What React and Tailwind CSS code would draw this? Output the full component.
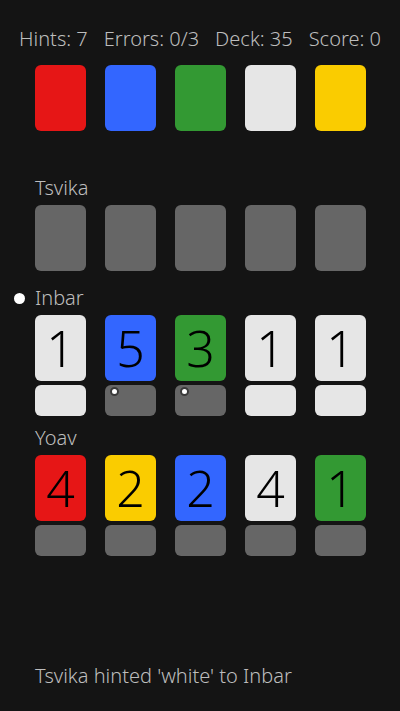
import React from "react";

const COLORS = {
  red: "bg-[#e61616]",
  blue: "bg-[#3366ff]",
  green: "bg-[#339933]",
  white: "bg-[#e6e6e6]",
  yellow: "bg-[#facc00]",
  back: "bg-[#666666]",
};

const fireworks = ["red", "blue", "green", "white", "yellow"];

const players = [
  { name: "Tsvika", mine: true, gap: "mb-[15px]", cards: [{}, {}, {}, {}, {}] },
  {
    name: "Inbar",
    active: true,
    gap: "mb-[10px]",
    cards: [
      { color: "white", n: 1, hint: "white" },
      { color: "blue", n: 5, dot: true },
      { color: "green", n: 3, dot: true },
      { color: "white", n: 1, hint: "white" },
      { color: "white", n: 1, hint: "white" },
    ],
  },
  {
    name: "Yoav",
    gap: "",
    cards: [
      { color: "red", n: 4 },
      { color: "yellow", n: 2 },
      { color: "blue", n: 2 },
      { color: "white", n: 4 },
      { color: "green", n: 1 },
    ],
  },
];

function Card({ color, n }) {
  return (
    <div
      className={`w-[51px] h-[66px] rounded-[6px] flex items-center justify-center text-[50px] font-light leading-none text-black ${
        COLORS[color] || COLORS.back
      }`}
    >
      {n}
    </div>
  );
}

function Hint({ hint, dot }) {
  return (
    <div
      className={`relative w-[51px] h-[31px] rounded-[6px] ${
        hint ? COLORS[hint] : COLORS.back
      }`}
    >
      {dot && (
        <span className="absolute left-[5px] top-[2px] w-[9px] h-[9px] rounded-full bg-white border-2 border-[#3a3a3a]" />
      )}
    </div>
  );
}

export default function App() {
  return (
    <div
      className="w-[400px] h-[711px] bg-[#141414] text-[#bdbdbd] font-light flex flex-col"
      style={{ fontFamily: "'Noto Sans', sans-serif" }}
    >
      <div className="flex justify-center gap-[16px] text-[20px] leading-6 mt-[27px]">
        <span>Hints: 7</span>
        <span>Errors: 0/3</span>
        <span>Deck: 35</span>
        <span>Score: 0</span>
      </div>

      <div className="flex gap-[19px] pl-[35px] mt-[14px]">
        {fireworks.map((c) => (
          <Card key={c} color={c} />
        ))}
      </div>

      <div className="flex flex-col pl-[35px] mt-[45px]">
        {players.map((p) => (
          <div key={p.name} className={`flex flex-col ${p.gap}`}>
            <div className="relative text-[20px] leading-6 h-6">
              {p.active && (
                <span className="absolute -left-[21px] top-[7px] w-[11px] h-[11px] rounded-full bg-white" />
              )}
              {p.name}
            </div>
            <div className="flex gap-[19px] mt-[5px]">
              {p.cards.map((c, i) => (
                <Card key={i} color={c.color} n={c.n} />
              ))}
            </div>
            {!p.mine && (
              <div className="flex gap-[19px] mt-[4px]">
                {p.cards.map((c, i) => (
                  <Hint key={i} hint={c.hint} dot={c.dot} />
                ))}
              </div>
            )}
          </div>
        ))}
      </div>

      <div className="mt-auto mb-[23px] pl-[35px] text-[20px] leading-6">
        Tsvika hinted 'white' to Inbar
      </div>
    </div>
  );
}
